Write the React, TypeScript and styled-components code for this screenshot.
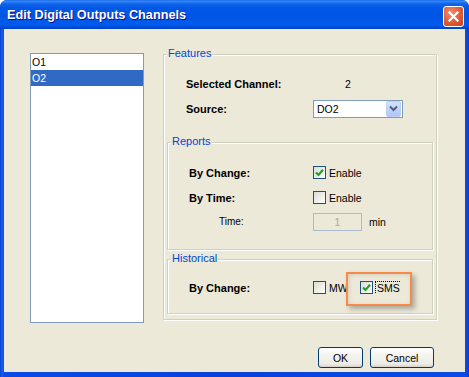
import React from 'react';
import styled, { createGlobalStyle } from 'styled-components';

const Global = createGlobalStyle`
  html, body { margin: 0; padding: 0; background: #ffffff; }
  body { font-family: "Liberation Sans", Arial, sans-serif; }
  * { box-sizing: border-box; }
`;

const Window = styled.div`
  width: 469px;
  height: 377px;
  display: flex;
  flex-direction: column;
  border-radius: 7px 7px 0 0;
  overflow: hidden;
  background: #0842db;
`;

const TitleBar = styled.div`
  height: 29px;
  flex: none;
  display: flex;
  align-items: center;
  justify-content: space-between;
  padding: 3px 5px 0 7px;
  background: linear-gradient(
    to bottom,
    #0a5fe6 0px,
    #3c8df6 1px,
    #2a7cf2 2px,
    #0e63e9 4px,
    #0058e6 8px,
    #0055e5 16px,
    #0059eb 22px,
    #005aee 25px,
    #004fd8 27px,
    #003fbe 29px
  );
`;

const TitleText = styled.span`
  color: #ffffff;
  font-weight: bold;
  font-size: 12.7px;
  text-shadow: 1px 1px 0 #0f1089;
  margin-top: -2px;
`;

const CloseButton = styled.div`
  width: 21px;
  height: 21px;
  border: 1px solid #ffffff;
  border-radius: 3px;
  background: radial-gradient(circle at 35% 30%, #f0906c 0%, #e2633c 45%, #c8401c 100%);
  display: flex;
  align-items: center;
  justify-content: center;
`;

const Frame = styled.div`
  flex: 1;
  display: flex;
  min-height: 0;
  padding: 0 4px 5px 4px;
  background: linear-gradient(to right, #0a3fd0 0px, #1660f0 2px, #0b4ae6 4px, #0842db 50%, #0b4ae6 calc(100% - 4px), #0a3fd0 100%);
`;

const Body = styled.div`
  flex: 1;
  min-width: 0;
  background: #ece9d8;
  display: flex;
  flex-direction: column;
  padding: 24px 0 0 26px;
`;

const MainRow = styled.div`
  display: flex;
  align-items: flex-start;
  gap: 19px;
`;

const ListBox = styled.div`
  width: 114px;
  height: 270px;
  border: 1px solid #7f9db9;
  background: #ffffff;
  display: flex;
  flex-direction: column;
`;

const ListItem = styled.div<{ $selected?: boolean }>`
  height: 16px;
  line-height: 16px;
  padding-left: 1px;
  font-size: 10.5px;
  color: ${p => (p.$selected ? '#ffffff' : '#000000')};
  background: ${p => (p.$selected ? '#316ac5' : 'transparent')};
`;

const Group = styled.div<{ $width?: number; $pad: string; $mt?: number }>`
  position: relative;
  ${p => (p.$width ? `width: ${p.$width}px; flex: none;` : '')}
  margin-top: ${p => p.$mt ?? 0}px;
  padding: ${p => p.$pad};
  border: 1px solid #d0d0bf;
  box-shadow: 1px 1px 0 #ffffff, inset 1px 1px 0 #ffffff;
`;

const GroupLabel = styled.span`
  position: absolute;
  top: -8px;
  left: 3px;
  padding: 0 1px;
  background: #ece9d8;
  color: #0046d5;
  font-size: 11px;
  line-height: 13px;
`;

const Row = styled.div<{ $indent: number; $label: number; $h?: number }>`
  display: grid;
  grid-template-columns: ${p => p.$label}px auto;
  align-items: center;
  height: ${p => p.$h ?? 25}px;
  padding-left: ${p => p.$indent}px;
`;

const FieldLabel = styled.span<{ $bold?: boolean }>`
  font-size: ${p => (p.$bold ? '11px' : '10px')};
  font-weight: ${p => (p.$bold ? 'bold' : 'normal')};
  color: #000000;
`;

const Controls = styled.div`
  display: flex;
  align-items: center;
`;

const Value = styled.span`
  padding-left: 32px;
  font-size: 10.5px;
  color: #000000;
`;

const Select = styled.div`
  width: 90px;
  height: 18px;
  border: 1px solid #7f9db9;
  background: #ffffff;
  display: flex;
  align-items: center;
`;

const SelectText = styled.span`
  flex: 1;
  padding-left: 3px;
  font-size: 10.5px;
  color: #000000;
`;

const SelectButton = styled.div`
  width: 15px;
  height: 16px;
  margin-right: 1px;
  border: 1px solid #bcd0f7;
  border-radius: 2px;
  background: linear-gradient(to bottom, #d6e2fc 0%, #c1d3fb 50%, #b0c6f5 100%);
  display: flex;
  align-items: center;
  justify-content: center;
`;

const CheckBox = styled.span`
  width: 13px;
  height: 13px;
  flex: none;
  border: 1px solid #1c5180;
  background: linear-gradient(135deg, #dcdcd7 0%, #f4f4f0 70%, #ffffff 100%);
  display: flex;
  align-items: center;
  justify-content: center;
`;

const CheckLabel = styled.label<{ $width?: number; $ml?: number }>`
  display: inline-flex;
  align-items: center;
  gap: 3px;
  font-size: 10.5px;
  color: #000000;
  white-space: nowrap;
  overflow: hidden;
  ${p => (p.$width ? `width: ${p.$width}px;` : '')}
  margin-left: ${p => p.$ml ?? 0}px;
`;

const FocusText = styled.span`
  outline: 1px dotted #000000;
  outline-offset: 0;
  padding: 0 1px;
  line-height: 12px;
`;

const TextInput = styled.div`
  width: 49px;
  height: 18px;
  border: 1px solid #a9bbd3;
  background: #ece9d8;
  color: #aca899;
  font-size: 10.5px;
  display: flex;
  align-items: center;
  justify-content: center;
`;

const Unit = styled.span`
  margin-left: 7px;
  font-size: 10.5px;
  color: #000000;
`;

const Highlight = styled.div`
  position: absolute;
  left: 178px;
  top: 12px;
  width: 66px;
  height: 34px;
  border: 2px solid #f58a4b;
  box-shadow: 3px 3px 5px rgba(0, 0, 0, 0.28), inset 1px 1px 4px rgba(0, 0, 0, 0.12);
  pointer-events: none;
`;

const ButtonRow = styled.div`
  display: flex;
  justify-content: flex-end;
  gap: 7px;
  margin-top: 24px;
  padding-right: 31px;
`;

const Button = styled.button<{ $width: number }>`
  width: ${p => p.$width}px;
  height: 21px;
  margin: 0;
  padding: 0;
  border: 1px solid #003c74;
  border-radius: 3px;
  background: linear-gradient(to bottom, #ffffff 0%, #f4f3ee 40%, #ecebe6 85%, #d6d0c5 100%);
  font-family: "Liberation Sans", Arial, sans-serif;
  font-size: 10.5px;
  color: #000000;
`;

const Check = () => (
  <svg width="9" height="9" viewBox="0 0 9 9">
    <polyline points="1,4.5 3.5,7 8,1.8" fill="none" stroke="#21a121" strokeWidth="2.2" />
  </svg>
);

const Box = ({ checked }: { checked?: boolean }) => <CheckBox>{checked ? <Check /> : null}</CheckBox>;

export default function App() {
  return (
    <>
      <Global />
      <Window>
        <TitleBar>
          <TitleText>Edit Digital Outputs Channels</TitleText>
          <CloseButton>
            <svg width="11" height="11" viewBox="0 0 11 11">
              <path d="M1.5 1.5 L9.5 9.5 M9.5 1.5 L1.5 9.5" stroke="#ffffff" strokeWidth="2.2" strokeLinecap="square" />
            </svg>
          </CloseButton>
        </TitleBar>
        <Frame>
          <Body>
            <MainRow>
              <ListBox>
                <ListItem>O1</ListItem>
                <ListItem $selected>O2</ListItem>
              </ListBox>
              <Group $width={274} $pad="16px 3px 5px 3px" $mt={1}>
                <GroupLabel>Features</GroupLabel>
                <Row $indent={19} $label={127}>
                  <FieldLabel $bold>Selected Channel:</FieldLabel>
                  <Value>2</Value>
                </Row>
                <Row $indent={19} $label={127}>
                  <FieldLabel $bold>Source:</FieldLabel>
                  <Select>
                    <SelectText>DO2</SelectText>
                    <SelectButton>
                      <svg width="9" height="7" viewBox="0 0 9 7">
                        <polyline points="1,1.5 4.5,5 8,1.5" fill="none" stroke="#4d6185" strokeWidth="2" />
                      </svg>
                    </SelectButton>
                  </Select>
                </Row>
                <Group $pad="17px 0 16px 0" $mt={21}>
                  <GroupLabel>Reports</GroupLabel>
                  <Row $indent={21} $label={124}>
                    <FieldLabel $bold>By Change:</FieldLabel>
                    <CheckLabel>
                      <Box checked />
                      Enable
                    </CheckLabel>
                  </Row>
                  <Row $indent={21} $label={124}>
                    <FieldLabel $bold>By Time:</FieldLabel>
                    <CheckLabel>
                      <Box />
                      Enable
                    </CheckLabel>
                  </Row>
                  <Row $indent={51} $label={94} $h={23}>
                    <FieldLabel>Time:</FieldLabel>
                    <Controls>
                      <TextInput>1</TextInput>
                      <Unit>min</Unit>
                    </Controls>
                  </Row>
                </Group>
                <Group $pad="15px 0 13px 0" $mt={9}>
                  <GroupLabel>Historical</GroupLabel>
                  <Row $indent={21} $label={124}>
                    <FieldLabel $bold>By Change:</FieldLabel>
                    <Controls>
                      <CheckLabel $width={34}>
                        <Box />
                        MW
                      </CheckLabel>
                      <CheckLabel $ml={13}>
                        <Box checked />
                        <FocusText>SMS</FocusText>
                      </CheckLabel>
                    </Controls>
                  </Row>
                  <Highlight />
                </Group>
              </Group>
            </MainRow>
            <ButtonRow>
              <Button $width={45}>OK</Button>
              <Button $width={64}>Cancel</Button>
            </ButtonRow>
          </Body>
        </Frame>
      </Window>
    </>
  );
}
